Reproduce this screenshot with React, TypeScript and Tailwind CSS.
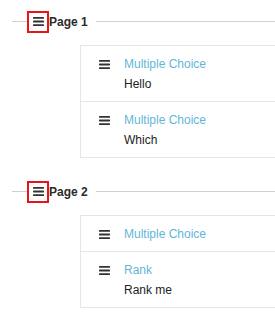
import React from 'react';

type Question = { kind: string; text?: string };

const pages: { title: string; questions: Question[] }[] = [
  {
    title: 'Page 1',
    questions: [
      { kind: 'Multiple Choice', text: 'Hello' },
      { kind: 'Multiple Choice', text: 'Which' },
    ],
  },
  {
    title: 'Page 2',
    questions: [{ kind: 'Multiple Choice' }, { kind: 'Rank', text: 'Rank me' }],
  },
];

const Bars: React.FC = () => (
  <svg width="11" height="9" viewBox="0 0 11 9" className="text-[#333]" fill="currentColor">
    <rect x="0" y="0" width="11" height="1.8" rx="0.6" />
    <rect x="0" y="3.6" width="11" height="1.8" rx="0.6" />
    <rect x="0" y="7.2" width="11" height="1.8" rx="0.6" />
  </svg>
);

const App: React.FC = () => {
  return (
    <div className="w-[275px] h-[320px] overflow-hidden bg-white pt-[11px] font-['Liberation_Sans',Arial,sans-serif]">
      {pages.map((page, i) => (
        <div key={page.title} className={i > 0 ? 'mt-[23px]' : ''}>
          {/* page header */}
          <div className="flex items-center h-[21px]">
            <div className="ml-[12px] w-[15px] h-px bg-[#cfcfcf]"></div>
            <div className="w-[22px] h-[22px] border-2 border-[#e8141c] flex items-center justify-center">
              <Bars />
            </div>
            <span className="text-[12px] font-bold text-[#2b2b2b] leading-none">{page.title}</span>
            <div className="flex-1 ml-[8px] h-px bg-[#cfcfcf]"></div>
          </div>

          {/* questions */}
          <div className="ml-[80px] mt-[13px] w-[220px] border border-[#e6e6e6]">
            {page.questions.map((q, j) => (
              <div
                key={j}
                className={`flex items-start pl-[18px] pt-[8px] pb-[7px] ${
                  j < page.questions.length - 1 ? 'border-b border-[#e6e6e6]' : ''
                }`}
              >
                <div className="h-[20px] w-[11px] flex items-center">
                  <Bars />
                </div>
                <div className="ml-[14px] text-[12px] leading-[20px]">
                  <div className="text-[#62b6d6]">{q.kind}</div>
                  {q.text && <div className="text-[#222]">{q.text}</div>}
                </div>
              </div>
            ))}
          </div>
        </div>
      ))}
    </div>
  );
};

export default App;
